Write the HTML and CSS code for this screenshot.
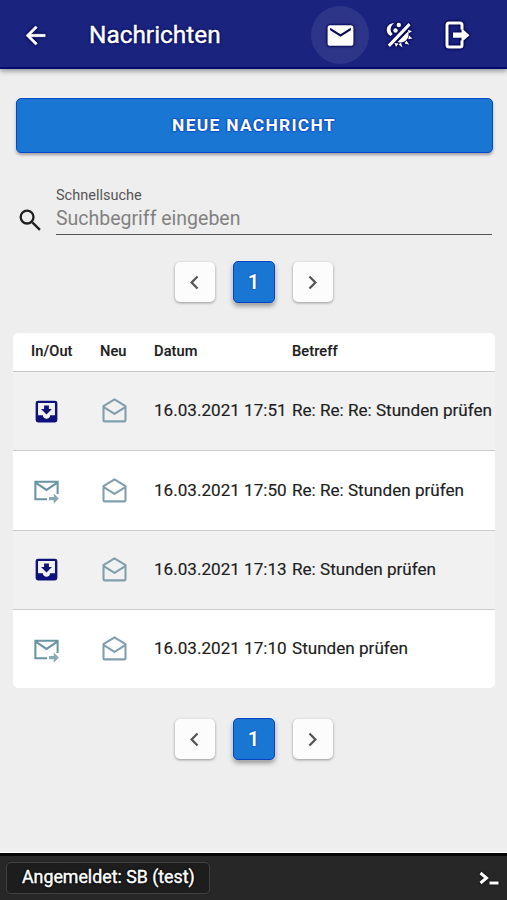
FILE: index.html
```
<!DOCTYPE html>
<html lang="de">
<head>
<meta charset="utf-8">
<title>Nachrichten</title>
<link rel="stylesheet" href="styles.css">
</head>
<body>
<svg class="sprite" aria-hidden="true">
  <symbol id="inbox" viewBox="0 0 24 24"><path fill-rule="evenodd" d="M5 3h14q2 0 2 2v14q0 2-2 2H5q-2 0-2-2V5q0-2 2-2zm0 2v10h4c0 1.650 1.350 3 3 3s3-1.350 3-3h4V5zm5 2h4v3h2.500L12 14.500 7.500 10H10z"/></symbol>
  <symbol id="sent" viewBox="0 0 24 24"><path fill="none" stroke="currentColor" stroke-width="1.700" d="M12.500 19.200H2.800V4.800h18.400v10M3 5.500l9 6 9-6"/><path d="M14 17.300h4V14.500l4.200 4.200-4.200 4.200v-2.800h-4z" opacity=".8"/></symbol>
  <symbol id="open" viewBox="0 0 24 24"><path fill="none" stroke="currentColor" stroke-width="1.700" stroke-linejoin="round" d="M2.900 8.300 12 2.700l9.100 5.600v11.700q0 1-1 1H3.900q-1 0-1-1zM3.100 9.200l8.900 5.600 8.900-5.600"/></symbol>
  <symbol id="left" viewBox="0 0 24 24"><path d="M15.410 16.580 10.830 12l4.580-4.590L14 6l-6 6 6 6z"/></symbol>
  <symbol id="right" viewBox="0 0 24 24"><path d="M8.590 16.580 13.170 12 8.590 7.410 10 6l6 6-6 6z"/></symbol>
</svg>
<header class="topbar">
  <svg class="icon back" viewBox="0 0 24 24"><path stroke="currentColor" stroke-width=".5" d="M20 11v2H8l5.500 5.500-1.420 1.420L4.160 12l7.920-7.920L13.500 5.500 8 11z"/></svg>
  <h1>Nachrichten</h1>
  <nav class="actions">
    <span class="action active"><svg class="icon mail" viewBox="0 0 24 24"><path d="M4 4h16q2 0 2 2v12q0 2-2 2H4q-2 0-2-2V6q0-2 2-2zm16 4V6l-8 5-8-5v2l8 5z"/></svg></span>
    <span class="action"><svg class="icon theme" viewBox="0 0 28 28"><path d="M9 2C4.800 2.300 1.500 5.200 1.700 9.200c.2 2.700 1.600 4.500 3.900 5.700l2.100-2C4.800 10.300 4.800 5.800 9 2zM23.500 2l2.200 2.200L5 26l-2.300-2.200zM23 10.500c1.800 4.700-.8 10.800-8.300 11.100l-2.200-.6z"/><circle cx="13.800" cy="4" r="2.200"/><circle cx="10.500" cy="9.500" r="2.200"/><path d="m23 8.700 4 1.500-3.500 2.300zM24 14.500l3.500 2.900-4.300.9zM21.300 19.500l3 4.300-4.600-1.400zM16 21.500l1.500 5-4-3zM9.500 22l4 .5-2.500 3.500z"/></svg></span>
    <span class="action"><svg class="icon exit" viewBox="0 0 27 28"><path fill="none" stroke="currentColor" stroke-width="3" d="M18 8.500V4q0-2-2-2H5Q3 2 3 4v20q0 2 2 2h11q2 0 2-2v-4.500"/><path d="M9 11.500h8.500V7L25.500 14.200l-8 7V16.700H9z"/></svg></span>
  </nav>
</header>
<main>
  <button class="new-message">NEUE NACHRICHT</button>
  <div class="search">
    <svg class="icon magnifier" viewBox="0 0 24 24"><path fill="none" stroke="currentColor" stroke-width="2" d="M14 14 20.500 20.500"/><circle cx="9.500" cy="9.500" r="5.500" fill="none" stroke="currentColor" stroke-width="2"/></svg>
    <label class="field"><span>Schnellsuche</span><input type="text" placeholder="Suchbegriff eingeben"></label>
  </div>
  <div class="pager">
    <button><svg class="icon"><use href="#left"/></svg></button><button class="current">1</button><button><svg class="icon"><use href="#right"/></svg></button>
  </div>
  <section class="table">
    <div class="row head"><span class="type">In/Out</span><span>Neu</span><span>Datum</span><span>Betreff</span></div>
    <div class="row shaded"><svg class="icon type in"><use href="#inbox"/></svg><svg class="icon letter"><use href="#open"/></svg><span>16.03.2021 17:51</span><span>Re: Re: Re: Stunden prüfen</span></div>
    <div class="row"><svg class="icon type out"><use href="#sent"/></svg><svg class="icon letter"><use href="#open"/></svg><span>16.03.2021 17:50</span><span>Re: Re: Stunden prüfen</span></div>
    <div class="row shaded"><svg class="icon type in"><use href="#inbox"/></svg><svg class="icon letter"><use href="#open"/></svg><span>16.03.2021 17:13</span><span>Re: Stunden prüfen</span></div>
    <div class="row"><svg class="icon type out"><use href="#sent"/></svg><svg class="icon letter"><use href="#open"/></svg><span>16.03.2021 17:10</span><span>Stunden prüfen</span></div>
  </section>
  <div class="pager lower">
    <button><svg class="icon"><use href="#left"/></svg></button><button class="current">1</button><button><svg class="icon"><use href="#right"/></svg></button>
  </div>
</main>
<footer>
  <span class="user">Angemeldet: SB (test)</span>
  <svg class="icon prompt" viewBox="0 0 20 16"><path fill="none" stroke="currentColor" stroke-width="3" d="m1.500 2 6 5-6 5M10.500 12h9"/></svg>
</footer>
</body>
</html>
```

FILE: styles.css
```
* { box-sizing: border-box; }
body {
  margin: 0;
  height: 900px;
  display: flex;
  flex-direction: column;
  overflow: hidden;
  background: #eee;
  color: #202020;
  font-family: Roboto, sans-serif;
}
button, input { font: inherit; }
.sprite { display: none; }
.icon { display: block; width: 29px; height: 29px; fill: currentColor; flex: none; }

.topbar {
  height: 69px;
  flex: none;
  display: flex;
  align-items: center;
  padding: 0 21px 0 21px;
  background: #1a237e;
  border-bottom: 2px solid #060b70;
  box-shadow: 0 2px 5px rgba(0, 0, 0, .4);
  color: #fff;
}
.topbar h1 {
  margin: 3px 0 0 39px;
  font-size: 24.4px;
  font-weight: 400;
  line-height: 32px;
  -webkit-text-stroke: .4px #fff;
  text-shadow: 0 0 2px #00004d, 0 0 3px #00004d;
}
.topbar .icon { filter: drop-shadow(0 0 1px #00004d) drop-shadow(0 0 1px #00004d); }
.topbar .back { margin-top: 3px; }
.actions { display: flex; margin: 3px 0 0 auto; }
.action { width: 58px; height: 58px; display: grid; place-items: center; border-radius: 50%; }
.active { background: #2d3589; margin-right: 1px; }
.actions .mail { width: 31px; height: 31px; }
.actions .theme { width: 28px; height: 28px; }
.actions .exit { width: 27px; height: 28px; }

main { flex: 1; padding: 29px 12px 0 13px; }
.new-message {
  display: block;
  width: 477px;
  height: 55px;
  margin-left: 2.500px;
  padding: 0 0 1px;
  border: 1.500px solid #0746c9;
  border-radius: 5px;
  background: #1976d2;
  color: #fff;
  font-size: 17.4px;
  font-weight: 700;
  letter-spacing: 1.3px;
  text-shadow: 0 0 2px #0030c0, 0 0 2px #0030c0;
  box-shadow: 0 2px 3px rgba(0, 0, 0, .35), 0 0 0 1px #f6f6f2;
}
.search { display: flex; margin: 33px 3px 0; }
.magnifier { width: 28px; height: 28px; margin-top: 20px; }
.field {
  flex: 1;
  display: flex;
  flex-direction: column;
  height: 49px;
  padding-top: 1px;
  margin-left: 12px;
  border-bottom: 1.500px solid #555;
}
.field span { font-size: 14.5px; line-height: 18px; color: #555; }
.field input {
  height: 27px;
  padding: 0;
  border: 0;
  outline: 0;
  background: none;
  font-size: 19.5px;
}
.field input::placeholder { color: #828282; opacity: 1; }

.pager { display: flex; justify-content: center; align-items: center; gap: 18px; height: 42px; margin-top: 26px; }
.pager button {
  width: 40px;
  height: 40px;
  display: grid;
  place-items: center;
  padding: 0;
  border: 0;
  border-radius: 5px;
  background: #fcfcfc;
  color: #555;
  box-shadow: 0 1px 3px rgba(0, 0, 0, .38);
}
.pager .icon { width: 27px; height: 27px; }
.pager .current {
  width: 42px;
  height: 42px;
  border: 1.500px solid #0542c8;
  background: #1976d2;
  color: #fff;
  font-size: 20px;
  font-weight: 600;
  text-shadow: 0 0 2px #0030c0;
  box-shadow: 0 3px 5px rgba(0, 0, 0, .38), 0 0 0 1px #fafaf5;
}
.pager { padding-right: 1px; }

.table { width: 482px; margin-top: 30px; border-radius: 5px; background: #fff; overflow: hidden; }
.row {
  height: 79.400px;
  display: grid;
  grid-template-columns: 87px 54px 138px 1fr;
  align-items: center;
  font-size: 17.1px;
  -webkit-text-stroke: .15px #202020;
  white-space: nowrap;
  border-bottom: 1.500px solid #cacaca;
}
.row span { margin-top: -2px; }
.row:last-child { border: 0; height: 78px; }
.shaded { background: #f1f1f1; }
.head { height: 39px; font-size: 14.6px; font-weight: 500; letter-spacing: .1px; }
.head .type { margin-left: 18px; }
.row .icon.type { margin-left: 19px; }
.row .icon.in { color: #10127c; }
.row .icon.out { color: #6a93a4; }
.row .icon.letter { color: #819eac; margin-top: -1px; }
.lower { margin-top: 30px; }

footer {
  height: 47px;
  flex: none;
  display: flex;
  align-items: center;
  justify-content: space-between;
  padding: 0 8px 0 6px;
  background: #272727;
  border-top: 3px solid #050505;
  box-shadow: 0 -1px #fff;
  color: #fff;
}
.user {
  width: 204px;
  height: 32px;
  padding-left: 15px;
  border: 1px solid #404040;
  border-radius: 5px;
  background: #1d1d1d;
  font-size: 17.8px;
  line-height: 28px;
  text-shadow: 0 0 2px #000, 0 0 3px #000;
  -webkit-text-stroke: .4px #fff;
  white-space: nowrap;
}
.prompt { width: 20px; height: 16px; margin-top: 2px; filter: drop-shadow(0 0 1px #000); }
```
